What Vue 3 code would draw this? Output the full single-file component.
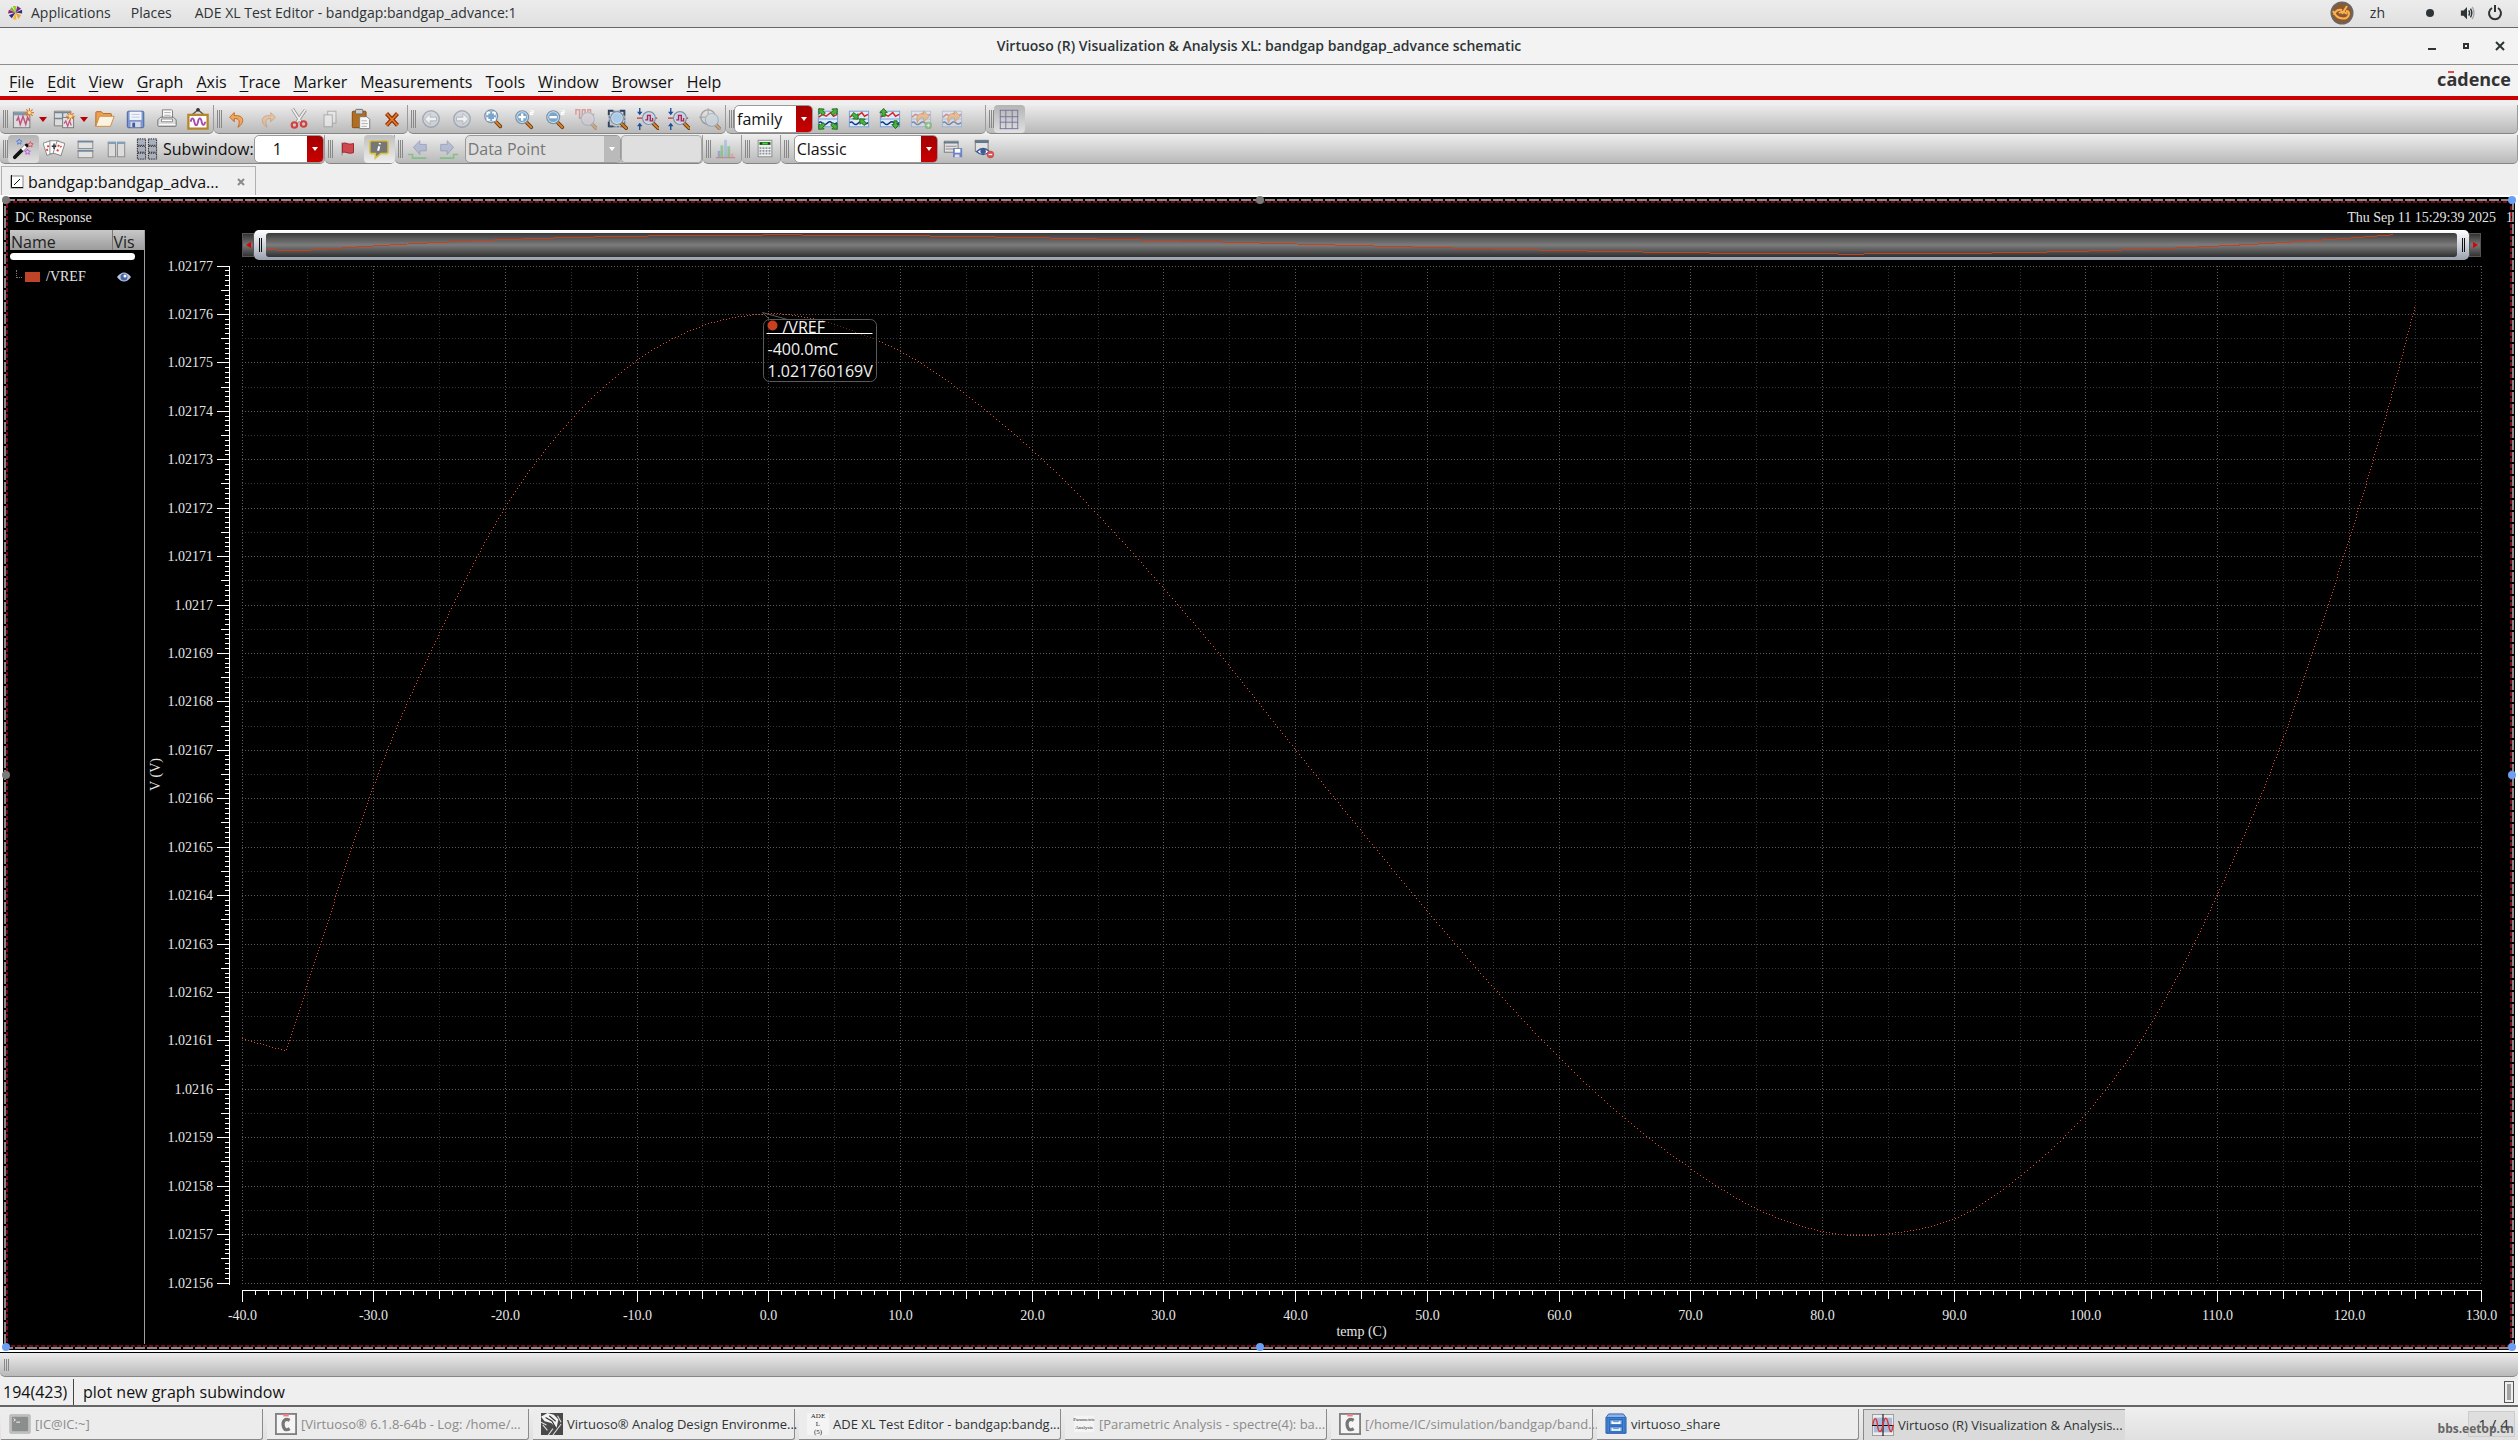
<script setup>
import { ref, computed, onMounted, onBeforeUnmount } from 'vue'

const menus = [
  ['', 'F', 'ile'], ['', 'E', 'dit'], ['', 'V', 'iew'], ['', 'G', 'raph'], ['', 'A', 'xis'],
  ['', 'T', 'race'], ['', 'M', 'arker'], ['M', 'e', 'asurements'], ['T', 'o', 'ols'],
  ['', 'W', 'indow'], ['', 'B', 'rowser'], ['', 'H', 'elp'],
]

const lens = (inner, cx = 10, cy = 9) =>
  `<path d="M${cx + 5} ${cy + 6}l5 5" stroke="#6b3a10" stroke-width="4" stroke-linecap="round"/><path d="M${cx + 5} ${cy + 6}l5 5" stroke="#d9852b" stroke-width="2" stroke-linecap="round"/><circle cx="${cx}" cy="${cy}" r="7" fill="#d3e2f0" stroke="#7d91a6" stroke-width="1.3"/><circle cx="${cx}" cy="${cy}" r="5.4" fill="#7aa6cc"/>${inner}`
const pulse = '<path d="M1 7v-5h4v9h3v-9h3v9h3v-9h3v5h4" fill="none" stroke="#c33" stroke-width="1.6"/>'
const waves = '<rect x="1.5" y="3.5" width="21" height="17" fill="#dcebfb" stroke="#6f9bd1"/>' +
  '<path d="M2 12h20" stroke="#6f9bd1"/><path d="M2 10l4-3 4 2 5-4 3 4 4-2" fill="none" stroke="#d22" stroke-width="1.6"/><path d="M2 16c3-3 4 3 7 2s4-5 7-2 4 1 6 0" fill="none" stroke="#16337e" stroke-width="1.6"/>'
const arrowHead = (x, y, a) =>
  `<g transform="translate(${x} ${y}) rotate(${a})"><path d="M0-4.5l4 4.5h-2.2v4h-3.6v-4h-2.2z" fill="#4db33d" stroke="#1a6b16" stroke-width="1"/></g>`
const spark = (x, y) =>
  `<path transform="translate(${x} ${y})" d="M0-5v10M-5 0h10M-3.5-3.5l7 7M-3.5 3.5l7-7" stroke="#e07a2d" stroke-width="1.2"/><circle cx="${x}" cy="${y}" r="1.8" fill="#ffe08a"/>`
const squiggle = '<path d="M5 14l2-4 2 8 3-9 3 9 2-8 2 4" fill="none" stroke="#c4527c" stroke-width="1.6"/>'

const icons = {
  newWin: `<rect x="1.5" y="4.5" width="18" height="17" fill="#dcdcdc" stroke="#777"/><path d="M2 6.5h17" stroke="#7d97ac" stroke-width="3"/>${squiggle}${spark(19, 5)}`,
  newSub: `<path d="M1.5 3.5h18v16h-18z" fill="#dcdcdc" stroke="#777"/><path d="M2 5h17M10.5 4v8M2 11.5h18" stroke="#6f8698" stroke-width="1.5"/><rect x="10.5" y="10.5" width="12" height="11" fill="#e4e4e4" stroke="#777"/><path d="M12 17l2-3 2 6 2-6 2 5" fill="none" stroke="#c4527c" stroke-width="1.3"/>${spark(19, 9)}`,
  open: '<path d="M2 20V5q0-1 1-1h5l2 2h8q1 0 1 1v4" fill="#e8a152" stroke="#b9621a"/><path d="M6 9h16l-4 11H2z" fill="#fbf3e2" stroke="#cf8a3b"/>',
  save: '<rect x="2.5" y="3.5" width="18" height="18" rx="1.5" fill="#7f98cf" stroke="#40599c"/><rect x="5" y="4" width="13" height="9" fill="#f2f6fc"/><path d="M7 7h9M7 10h9" stroke="#b8c6df"/><rect x="6" y="15" width="11" height="6" fill="#d6dbe4"/><rect x="8" y="16" width="3" height="5" fill="#40599c"/>',
  print: '<path d="M7 12V2h10l1 1v9" fill="#fafafa" stroke="#777"/><path d="M9 5h7M9 8h7" stroke="#aaa"/><path d="M2 13l3-3h14l3 3v6q0 1-1 1H3q-1 0-1-1z" fill="#dcdcdc" stroke="#6e6e6e"/><path d="M6 12h12v3h-12z" fill="#fff" stroke="#888"/><path d="M3 18h18" stroke="#fff"/>',
  frame: '<path d="M12 2L5 8M12 2l7 6" stroke="#555" stroke-width="1.5"/><circle cx="12" cy="2" r="2" fill="#333"/><rect x="1.5" y="7.5" width="21" height="15" fill="#fff" stroke="#b5872a" stroke-width="2.5"/><path d="M4 15c1-5 3-5 4 0s3 5 4 0 3-5 4 0 3 4 4 0" fill="none" stroke="#a848b0" stroke-width="2"/>',
  undo: '<path d="M9 5l-5 5 5 5v-3.5c5-.5 7 3 4 9.5 8-5 7-14-4-12.5z" fill="#f0a95c" stroke="#c2641a"/>',
  redo: '<path opacity=".5" d="M15 5l5 5-5 5v-3.5c-5-.5-7 3-4 9.5-8-5-7-14 4-12.5z" fill="#f2b272" stroke="#c2763a"/>',
  cut: '<path d="M5 1l9 14M19 2l-9 13" stroke="#888" stroke-width="3.5"/><path d="M5 1l9 14M19 2l-9 13" stroke="#eee" stroke-width="2"/><circle cx="7" cy="18.5" r="3" fill="none" stroke="#d3403b" stroke-width="2.3"/><circle cx="17" cy="17.5" r="3" fill="none" stroke="#d3403b" stroke-width="2.3"/>',
  copy: '<g opacity=".6"><rect x="9.5" y="3.5" width="9" height="13" fill="#eee" stroke="#888"/><rect x="5.5" y="7.5" width="9" height="13" fill="#f2f2f2" stroke="#888"/></g>',
  paste: '<rect x="2.5" y="3.5" width="15" height="18" rx="1" fill="#b36d1f" stroke="#7c4710"/><rect x="6" y="1.5" width="8" height="5" rx="1" fill="#ccc" stroke="#666"/><path d="M10.5 9.5h8l3 3v10h-11z" fill="#f8f8f8" stroke="#777"/><path d="M12.5 14h6M12.5 17h7M12.5 20h6" stroke="#aaa"/>',
  del: '<path d="M6 6l12 13M18 6L6 19" stroke="#8f3604" stroke-width="4.5"/><path d="M6 6l12 13M18 6L6 19" stroke="#e8772c" stroke-width="1.8"/>',
  back: '<g opacity=".65"><circle cx="12" cy="12" r="9" fill="#cfd5de" stroke="#8793a5" stroke-width="1.5"/><path d="M5 12l6-6v4h7v4h-7v4z" fill="#fff" stroke="#9aa5b5"/></g>',
  fwd: '<g opacity=".65"><circle cx="12" cy="12" r="9" fill="#cfd5de" stroke="#8793a5" stroke-width="1.5"/><path d="M19 12l-6-6v4H6v4h7v4z" fill="#fff" stroke="#9aa5b5"/></g>',
  zoomFit: lens('<path d="M6 8V5h3M14 8V5h-3M6 10v3h3M14 10v3h-3" stroke="#fff" stroke-width="1.8" fill="none"/>'),
  zoomIn: lens('<path d="M10 6v8M6 10h8" stroke="#fff" stroke-width="2.5"/>', 10, 10) + '<path d="M19 3h3v2h-3v2h3" stroke="#fff" stroke-width="1.3" fill="none"/>',
  zoomOut: lens('<path d="M6 10h8" stroke="#fff" stroke-width="2.5"/>', 10, 10) + '<path d="M19 3h3v2h-3v2h3" stroke="#fff" stroke-width="1.3" fill="none"/>',
  zoomPulse: `<g opacity=".4">${pulse}${lens('', 14, 12).replace('#7aa6cc', '#d5c5d5')}</g>`,
  zoomArea: `<path d="M3 8V3h5M20 8V3h-5M3 15v5h5" fill="none" stroke="#2c3e57" stroke-width="2"/><rect x="3.5" y="3.5" width="17" height="17" fill="none" stroke="#41597a" stroke-dasharray="3 1"/>${lens('', 12, 11).replace('#7aa6cc', '#a9cbe8')}`,
  zoomX: `<path d="M3 0v6M3 24v-6" stroke="#1b4f9c" stroke-width="1.5"/><path d="M0 4l3 4 3-4zM0 20l3-4 3 4z" fill="#1b4f9c"/><path d="M0 11h8v-4h4v4h10" stroke="#c33" fill="none" stroke-width="1.5"/>${lens('<path d="M9 13h2.5v-5h3v6h2.5v-3" stroke="#b0234f" stroke-width="1.5" fill="none"/>', 13, 11).replace('#7aa6cc', '#c5cfe6')}`,
  zoomTarget: `<g opacity=".5"><circle cx="10" cy="10" r="8" fill="none" stroke="#666" stroke-width="1.5"/><path d="M10 0v20M0 10h20" stroke="#666"/>${lens('', 14, 13).replace('#7aa6cc', '#c5d5e0')}</g>`,
  waveOut: `${waves}${arrowHead(5, 4, -45)}${arrowHead(19, 4, 45)}${arrowHead(5, 20, -135)}${arrowHead(19, 20, 135)}`,
  waveIn: `${waves}${arrowHead(8, 9, 135)}${arrowHead(16, 15, -45)}`,
  waveV: `${waves}${arrowHead(5, 5, 0)}${arrowHead(18, 18, 180)}`,
  waveAdd: `<g opacity=".45">${waves}<path d="M8 16c-2-8 2-11 7-9V3l6 6-6 6v-4c-4-1-5 1-7 5" fill="#f0a04b" stroke="#c2641a"/><circle cx="20" cy="19" r="4" fill="#3faa36"/><path d="M20 17v4M18 19h4" stroke="#fff" stroke-width="1.5"/></g>`,
  waveRedo: `<g opacity=".45">${waves}<path d="M8 16c-2-8 2-11 7-9V3l6 6-6 6v-4c-4-1-5 1-7 5" fill="#f0a04b" stroke="#c2641a"/></g>`,
  grid: '<path d="M2.5 2v21M8.5 2v21M15.5 2v21M21.5 2v21M2 2.5h20M2 9.5h20M2 15.5h20M2 22.5h20" stroke="#73739b"/>',
  wand: '<path d="M3 21L16 8" stroke="#111" stroke-width="4" stroke-linecap="round"/><path d="M11 13l4-4" stroke="#fff" stroke-width="3.5"/><path d="M8 1l1 2 2 .3-1.5 1.5.4 2L8 5.8l-1.9 1 .4-2L5 3.3 7 3z" fill="none" stroke="#4a7be0"/><path d="M20 4l1 2 2 .3-1.5 1.5.4 2-1.9-1-1.9 1 .4-2L17 6.3l2-.3z" fill="none" stroke="#e04a55"/><path d="M17 12l1 2 2 .3-1.5 1.5.4 2-1.9-1-1.9 1 .4-2L14 14.3l2-.3z" fill="none" stroke="#c04ae0"/>',
  cards: '<rect x="2" y="4" width="9" height="14" fill="#fff" stroke="#888" transform="rotate(-18 6 11)"/><rect x="7.5" y="3" width="9" height="14" fill="#fff" stroke="#888"/><rect x="13" y="4" width="9" height="14" fill="#fafafa" stroke="#888" transform="rotate(18 17 11)"/><path d="M5 8l1 2M4 12l1 2M16 8l2 1M15 13l2 1M19 9l1 1" stroke="#e04040" stroke-width="2"/><path d="M12 6v6M9.5 9h5" stroke="#333" stroke-width="1.5"/>',
  rows: '<rect x="4.5" y="3.5" width="16" height="8" fill="#e2e2e2" stroke="#888"/><rect x="4.5" y="13.5" width="16" height="8" fill="#e2e2e2" stroke="#888"/><path d="M4 4h17M4 14h17" stroke="#7188a0" stroke-width="2"/>',
  cols: '<rect x="3.5" y="4.5" width="8" height="16" fill="#dcdcdc" stroke="#888"/><rect x="13.5" y="4.5" width="8" height="16" fill="#dcdcdc" stroke="#888"/><path d="M3 5.5h9M13 5.5h9" stroke="#7ba0be" stroke-width="2"/>',
  six: '<g fill="#a9b0bd" stroke="#111" stroke-dasharray="1.5 1"><rect x="1.5" y="1" width="9" height="7"/><rect x="13.5" y="1" width="9" height="7"/><rect x="1.5" y="9" width="9" height="6.5"/><rect x="13.5" y="9" width="9" height="6.5"/><rect x="1.5" y="16.5" width="9" height="6.5"/><rect x="13.5" y="16.5" width="9" height="6.5"/></g>',
  flag: '<path d="M5.5 5v14" stroke="#999" stroke-width="1.5"/><path d="M6 6c4-2 5 2 12 0v10c-7 2-8-2-12 0z" fill="#cf4a50" stroke="#9d2027"/>',
  info: '<path d="M4 3h16q2 0 2 2v10q0 2-2 2h-6l-6 5v-5H4q-2 0-2-2V5q0-2 2-2z" fill="#777" stroke="#d9c34a" stroke-width="1.8"/><path d="M13 5.5l-.3 1.5M12.3 9L11 14" stroke="#fff" stroke-width="2.2"/>',
  prev: '<g opacity=".75"><path d="M1 18h5v4h15" fill="none" stroke="#6fbf73" stroke-width="1.8"/><path d="M7 10l7-7v4h7v7h-7v4z" fill="#a9b4d0" stroke="#8490b0"/></g>',
  next: '<g opacity=".75"><path d="M22 18h-5v4H2" fill="none" stroke="#6fbf73" stroke-width="1.8"/><path d="M17 10l-7-7v4H3v7h7v4z" fill="#a9b4d0" stroke="#8490b0"/></g>',
  hist: '<g opacity=".5"><path d="M3 21v-7h3v7z" fill="#6c86c8"/><path d="M6 21V8h3v13z" fill="#55b85c"/><path d="M10 21V2h3v19z" fill="#88a8e8"/><path d="M13.5 21V9h3v12z" fill="#55b85c"/><path d="M17 21v-4h3v4z" fill="#e88"/><path d="M1 21.5h21" stroke="#c33"/></g>',
  calc: '<rect x="4.5" y="2.5" width="15" height="18" fill="#eee" stroke="#888"/><path d="M6 6h12" stroke="#124a10" stroke-width="3"/><path d="M9 6h6" stroke="#3fd43b" stroke-width="2"/><path d="M6 11h12M6 14h12M6 17h12" stroke="#8a939b" stroke-width="2" stroke-dasharray="2 1.3"/>',
  listSave: '<rect x="2.5" y="3.5" width="15" height="12" fill="#e2e2e2" stroke="#777"/><path d="M2 5h16" stroke="#63788c" stroke-width="2"/><path d="M4 9h12M4 12h12" stroke="#888"/><rect x="12" y="11" width="10" height="10" fill="#6f84c4"/><rect x="14" y="12" width="6" height="4" fill="#fff"/><rect x="14" y="18" width="5" height="3" fill="#dde"/>',
  eyeDel: '<rect x="2.5" y="2.5" width="14" height="12" fill="#e2e2e2" stroke="#777"/><path d="M2 4h15" stroke="#63788c" stroke-width="3"/><path d="M4 15q7-7 14 0-7 6-14 0z" fill="#fff" stroke="#3d5a94" stroke-width="1.5"/><circle cx="11" cy="14.5" r="3" fill="#3d5a94"/><circle cx="19" cy="18" r="4" fill="#d25050"/><path d="M17 18h4" stroke="#fff" stroke-width="1.5"/>',
}

const bar1 = [
  { items: [{ n: 'newWin', t: 'New window' }, { drop: 'New window menu' }, { n: 'newSub', t: 'New subwindow' }, { drop: 'New subwindow menu' }, { n: 'open', t: 'Open' }, { n: 'save', t: 'Save' }, { n: 'print', t: 'Print' }, { n: 'frame', t: 'Save image' }] },
  { items: [{ n: 'undo', t: 'Undo' }, { n: 'redo', t: 'Redo' }, { n: 'cut', t: 'Cut' }, { n: 'copy', t: 'Copy' }, { n: 'paste', t: 'Paste' }, { n: 'del', t: 'Delete' }] },
  { items: [{ n: 'back', t: 'Previous view' }, { n: 'fwd', t: 'Next view' }, { n: 'zoomFit', t: 'Fit' }, { n: 'zoomIn', t: 'Zoom in' }, { n: 'zoomOut', t: 'Zoom out' }, { n: 'zoomPulse', t: 'Fit trace' }, { n: 'zoomArea', t: 'Zoom area' }, { n: 'zoomX', t: 'Zoom X' }, { n: 'zoomX', t: 'Zoom Y' }, { n: 'zoomTarget', t: 'Zoom to marker' }] },
  { cls: 'family', items: [{ select: 'family', w: 'w-s' }, { n: 'waveOut', t: 'Split all' }, { n: 'waveIn', t: 'Combine' }, { n: 'waveV', t: 'Split strips' }, { n: 'waveAdd', t: 'Append' }, { n: 'waveRedo', t: 'Replace' }] },
  { cls: 'fill', items: [{ n: 'grid', t: 'Grids', on: true }] },
]
const bar2 = [
  { items: [{ n: 'wand', t: 'Toggle assistants', on: true }, { n: 'cards', t: 'Cards' }, { n: 'rows', t: 'Horizontal' }, { n: 'cols', t: 'Vertical' }, { n: 'six', t: 'Tile' }, { label: 'Subwindow:' }, { select: '1', w: 'w-n' }] },
  { items: [{ n: 'flag', t: 'Flag' }, { n: 'info', t: 'Trace info', lit: true }] },
  { items: [{ n: 'prev', t: 'Previous edge' }, { n: 'next', t: 'Next edge' }, { select: 'Data Point', w: 'w-l', off: true }, { input: true }] },
  { items: [{ n: 'hist', t: 'Histogram' }] },
  { items: [{ n: 'calc', t: 'Calculator' }] },
  { cls: 'fill classic', items: [{ select: 'Classic', w: 'w-m' }, { n: 'listSave', t: 'Save workspace' }, { n: 'eyeDel', t: 'Delete workspace' }] },
]

const tasks = [
  { icon: 'term', text: '[IC@IC:~]', dim: true },
  { icon: 'c', text: '[Virtuoso® 6.1.8-64b - Log: /home/...', dim: true },
  { icon: 'hand', text: 'Virtuoso® Analog Design Environme...' },
  { icon: 'ade', text: 'ADE XL Test Editor - bandgap:bandg...' },
  { icon: 'par', text: '[Parametric Analysis - spectre(4): ba...', dim: true },
  { icon: 'c', text: '[/home/IC/simulation/bandgap/band...', dim: true },
  { icon: 'cab', text: 'virtuoso_share' },
  { icon: 'wave', text: 'Virtuoso (R) Visualization & Analysis...', active: true },
]
const taskIcons = {
  term: '<rect x="1" y="2" width="22" height="20" rx="1" fill="#c9c9c9" stroke="#aaa"/><rect x="3" y="4" width="18" height="16" fill="#8a8f8d"/><path d="M5 6l2 1.5-2 1.5M8 10h4" stroke="#fff" fill="none"/>',
  c: '<rect x="1" y="1" width="22" height="22" fill="#f5f5f5" stroke="#808080" stroke-width="2"/><path d="M16 8c-5-3-8 1-7 6s4 5 7 3" fill="none" stroke="#777" stroke-width="3.5"/><path d="M9 2.5h6" stroke="#f28080" stroke-width="2.5"/>',
  hand: '<rect width="24" height="24" fill="#4a4a4a"/><path d="M0 4l7-4 7 2 5 5-2 9-6-5-7-2z" fill="#f4f4f4"/><path d="M5 5l7 4 4 7M9 3l7 6" stroke="#333" stroke-width="1.2" fill="none"/><path d="M2 13l5 6M13 24l9-12M0 10l6 3M8 24l5-7M18 3l4 7" stroke="#ddd" stroke-width="1.2" fill="none"/>',
  ade: '<rect width="24" height="24" fill="#f4f4f4"/>',
  par: '<rect x="1" y="3" width="22" height="18" fill="#f4f4f4"/>',
  cab: '<path d="M4 1h16l3 4v17H1V5z" fill="#8ab2e8" stroke="#2c61ad"/><rect x="2" y="5" width="20" height="17" fill="#4383d3" stroke="#2c61ad"/><rect x="5" y="7" width="14" height="6" fill="#6ba0e0" stroke="#2c61ad"/><rect x="5" y="14.5" width="14" height="6" fill="#6ba0e0" stroke="#2c61ad"/><path d="M8 9v2h8v-2M8 16.5v2h8v-2" fill="none" stroke="#fff" stroke-width="1.8"/>',
  wave: '<rect x=".5" y=".5" width="23" height="23" fill="#ececec" stroke="#999"/><rect x="2" y="4" width="20" height="16" fill="#a9bbdd"/><path d="M12 0v24M0 12.5h24" stroke="#111" stroke-width="1.2"/><path d="M1 12C2 3 5 3 6 12s4 10 6 0 4-10 6 0 4 9 5 0" fill="none" stroke="#d33" stroke-width="1.6"/>',
}

/* DC sweep result: temperature in C, voltage as 10 uV steps above 1.02156 V */
const sweep = [
  [-40, 5.05], [-36.7, 4.8], [-30, 10.3], [-25, 13.45], [-20, 16.05], [-15, 17.85], [-10, 19.07], [-5, 19.78],
  [-0.4, 20.02], [2.8, 19.95], [5.4, 19.76], [10, 19.24], [14.4, 18.46], [20, 17.2], [25, 15.85], [30, 14.33],
  [35, 12.72], [40, 11], [45, 9.32], [50, 7.67], [55, 6.1], [60, 4.65], [65, 3.39], [70, 2.36], [75, 1.53],
  [80, 1.07], [84, 1], [90, 1.34], [95, 2.23], [100, 3.52], [105, 5.41], [110, 8.06], [115, 11.3],
  [120.2, 15.59], [122.8, 17.98], [125, 20.22],
]

const canvas = ref(null)
const w = ref(2370)
const h = ref(1090)
let observer
onMounted(() => {
  const measure = () => {
    w.value = canvas.value.clientWidth
    h.value = canvas.value.clientHeight
  }
  measure()
  observer = new ResizeObserver(measure)
  observer.observe(canvas.value)
})
onBeforeUnmount(() => observer && observer.disconnect())

const box = computed(() => ({ l: 97, r: w.value - 34, t: 6, b: h.value - 67 }))
const px = (t) => box.value.l + ((t + 40) / 170) * (box.value.r - box.value.l)
const py = (u) => box.value.b - (u / 21) * (box.value.b - box.value.t)
const snap = (v) => Math.floor(v) + 0.5

/* Hermite interpolation through the sweep points; the first span stays straight */
const curve = (() => {
  const slope = sweep.map((p, i) => {
    const a = sweep[i <= 1 ? i : i - 1]
    const b = sweep[i === 0 ? 1 : Math.min(i + 1, sweep.length - 1)]
    return (b[1] - a[1]) / (b[0] - a[0])
  })
  const out = [sweep[0]]
  for (let i = 0; i < sweep.length - 1; i++) {
    const [t0, u0] = sweep[i]
    const [t1, u1] = sweep[i + 1]
    const d = t1 - t0
    for (let k = 1; k <= 8; k++) {
      const s = k / 8
      const u = i === 0
        ? u0 + (u1 - u0) * s
        : (2 * s ** 3 - 3 * s ** 2 + 1) * u0 + (s ** 3 - 2 * s ** 2 + s) * d * slope[i] +
          (3 * s ** 2 - 2 * s ** 3) * u1 + (s ** 3 - s ** 2) * d * slope[i + 1]
      out.push([t0 + d * s, u])
    }
  }
  return out
})()

/* one single-pixel dot for every third pixel along the steeper axis */
const trace = computed(() => {
  const pts = curve.map(([t, u]) => [px(t), py(u)])
  let d = ''
  let next = 0
  for (let i = 1; i < pts.length; i++) {
    const [x0, y0] = pts[i - 1]
    const [x1, y1] = pts[i]
    const len = Math.max(Math.abs(x1 - x0), Math.abs(y1 - y0))
    while (next < len) {
      const s = next / len
      d += `M${Math.round(x0 + (x1 - x0) * s)} ${Math.round(y0 + (y1 - y0) * s)}h1v1h-1z`
      next += 3
    }
    next -= len
  }
  return d
})
const miniTrace = computed(() => 'M' + curve.map(([t, u]) =>
  `${((t + 40) / 170) * (box.value.r - box.value.l - 48)} ${22 - u}`).join('L'))

const xTicks = computed(() => Array.from({ length: 171 }, (_, i) => ({
  x: snap(px(i - 40)), len: i % 10 === 0 ? 12 : i % 5 === 0 ? 9 : 5, label: i % 10 === 0 ? (i - 40).toFixed(1) : '',
})))
const yTicks = computed(() => Array.from({ length: 211 }, (_, i) => ({
  y: snap(py(i / 10)), len: i % 10 === 0 ? 13 : i % 5 === 0 ? 9 : 5,
  label: i % 10 === 0 ? String(+(1.02156 + i / 1000000).toFixed(5)) : '',
})))
const xGrid = computed(() => Array.from({ length: 35 }, (_, i) => ({ p: snap(px(i * 5 - 40)), major: i % 2 === 0 })))
const yGrid = computed(() => Array.from({ length: 43 }, (_, i) => ({ p: snap(py(i / 2)), major: i % 2 === 0 })))
const tip = computed(() => ({ x: Math.floor(px(-0.4)) - 0.5, y: Math.floor(py(20.02)) - 0.5 }))
</script>

<template>
  <div class="screen">
    <header class="topbar">
      <svg class="gnome" viewBox="0 0 16 16">
        <path d="M8 8L5 1h4z" fill="#9ccd2a" /><path d="M8 8l2-7 4 3z" fill="#7b2a7d" /><path d="M8 8l7-3v4z" fill="#2b2d7a" />
        <path d="M8 8l6 3-3 4z" fill="#efa724" /><path d="M8 8l1 8-4-1z" fill="#f0b93a" /><path d="M8 8l-4 6-3-3z" fill="#2b2d7a" />
        <path d="M8 8L0 9l1-4z" fill="#932279" /><path d="M8 8L2 5l2-3z" fill="#7fae28" />
      </svg>
      <button class="app">Applications</button>
      <button class="places">Places</button>
      <span>ADE XL Test Editor - bandgap:bandgap_advance:1</span>
      <div class="tray">
        <svg class="ime" viewBox="0 0 24 24"><circle cx="12" cy="12" r="11.5" fill="#6d6560" /><circle cx="12" cy="12" r="9.5" fill="#8a5a35" /><path d="M3 10q3 6 7 7 8 2 9-4 0-3-3-3M4 14q2-6 8-5M12 13l5-8M9 12q4-3 8 1" fill="none" stroke="#ffb14a" stroke-width="2" /></svg>
        <span class="lang">zh</span>
        <svg class="rec" viewBox="0 0 10 10"><circle cx="5" cy="5" r="4" fill="#2e3436" /></svg>
        <svg class="vol" viewBox="0 0 16 16"><path d="M1 5h3l4-4v14l-4-4H1z" fill="#2e3436" /><path d="M10 5q2 3 0 6M12 3q3 5 0 10" fill="none" stroke="#2e3436" stroke-width="1.6" /><path d="M14 1q4 7 0 14" fill="none" stroke="#aaa" stroke-width="1.6" /></svg>
        <svg class="pow" viewBox="0 0 16 16"><path d="M5 3a6 6 0 1 0 6 0M8 0v7" fill="none" stroke="#2e3436" stroke-width="2" /></svg>
      </div>
    </header>

    <div class="titlebar">
      <span class="spacer"></span>
      <h1>Virtuoso (R) Visualization &amp; Analysis XL: bandgap bandgap_advance schematic</h1>
      <div class="winbtns">
        <button aria-label="Minimize"><svg viewBox="0 0 10 10"><path d="M1 8h8" stroke="#2e3436" stroke-width="2" /></svg></button>
        <button aria-label="Restore"><svg viewBox="0 0 10 10"><rect x="3" y="3" width="4" height="4" fill="none" stroke="#2e3436" stroke-width="2" /></svg></button>
        <button aria-label="Close"><svg viewBox="0 0 10 10"><path d="M1 1l8 8M9 1L1 9" stroke="#2e3436" stroke-width="2" /></svg></button>
      </div>
    </div>

    <nav class="menubar">
      <button v-for="m in menus" :key="m.join('')">{{ m[0] }}<u>{{ m[1] }}</u>{{ m[2] }}</button>
      <strong class="brand">c<span>a</span>dence</strong>
    </nav>

    <div class="toolbars">
      <div v-for="(bar, b) in [bar1, bar2]" :key="b" class="bar">
        <div v-for="(seg, s) in bar" :key="s" class="seg" :class="seg.cls">
          <i class="grip"></i>
          <template v-for="(it, i) in seg.items" :key="i">
            <button v-if="it.n" class="tool" :class="{ on: it.on, lit: it.lit }" :aria-label="it.t">
              <svg viewBox="0 0 24 24" fill="none" v-html="icons[it.n]"></svg>
            </button>
            <button v-else-if="it.drop" class="drop" :aria-label="it.drop"></button>
            <label v-else-if="it.label" class="lbl" for="sel-1">{{ it.label }}</label>
            <div v-else-if="it.select" class="combo" :class="[it.w, { off: it.off }]">
              <select :id="'sel-' + it.select.replace(' ', '-')" :aria-label="it.select" :disabled="it.off"><option>{{ it.select }}</option></select>
              <i class="caret"></i>
            </div>
            <input v-else class="value" type="text" aria-label="Value" disabled />
          </template>
        </div>
      </div>
    </div>

    <div class="tabs">
      <div class="tab">
        <svg class="tabicon" viewBox="0 0 14 14"><rect x="1" y="1" width="12" height="12" fill="#fff" stroke="#888" /><path d="M1.5 0v12.5H13M4 10l6-6" fill="none" stroke="#111" /></svg>
        <span>bandgap:bandgap_adva...</span>
        <button aria-label="Close tab"><svg viewBox="0 0 8 8"><path d="M1 1l6 6M7 1L1 7" stroke="#8a8a8a" stroke-width="2" /></svg></button>
      </div>
    </div>

    <main class="graph">
      <div class="head">
        <span>DC Response</span>
        <time>Thu Sep 11 15:29:39 2025</time>
        <span class="idx">1</span>
      </div>
      <div class="body">
        <div class="legend">
          <table>
            <thead><tr><th class="name">Name</th><th class="vis">Vis</th></tr></thead>
            <tbody>
              <tr class="filter"><td colspan="2"><input type="text" aria-label="Filter traces" /></td></tr>
              <tr class="entry">
                <td><div><i class="branch"></i><i class="swatch"></i>/VREF</div></td>
                <td class="eye"><svg viewBox="0 0 14 10"><path d="M0 5q7-9 14 0-7 9-14 0z" fill="#b8c6e4" /><circle cx="7" cy="5" r="3.5" fill="#4a66a8" /><circle cx="8" cy="4" r="1.5" fill="#fff" /></svg></td>
              </tr>
            </tbody>
          </table>
        </div>
        <div class="plot">
          <div class="range">
            <button class="step left" aria-label="Pan left"></button>
            <div class="window">
              <button class="knob" aria-label="Range start"></button>
              <div class="track"><svg><path :d="miniTrace" fill="none" stroke="#c8401f" shape-rendering="crispEdges" /></svg></div>
              <button class="knob" aria-label="Range end"></button>
            </div>
            <button class="step right" aria-label="Pan right"></button>
          </div>
          <div ref="canvas" class="canvas">
            <svg :width="w" :height="h">
              <g shape-rendering="crispEdges">
                <line v-for="g in xGrid" :key="'x' + g.p" :class="g.major ? 'major' : 'minor'" :x1="g.p" :x2="g.p" :y1="box.t" :y2="box.b" />
                <line v-for="g in yGrid" :key="'y' + g.p" :class="g.major ? 'major' : 'minor'" :x1="box.l" :x2="box.r" :y1="g.p" :y2="g.p" />
                <line class="axis" :x1="84.5" :x2="84.5" :y1="box.t" :y2="box.b + 2" />
                <line class="axis" :x1="box.l" :x2="box.r + 1" :y1="snap(box.b + 7)" :y2="snap(box.b + 7)" />
                <line v-for="(t, i) in yTicks" :key="'a' + i" class="axis" :x1="85 - t.len" :x2="85" :y1="t.y" :y2="t.y" />
                <line v-for="(t, i) in xTicks" :key="'b' + i" class="axis" :x1="t.x" :x2="t.x" :y1="box.b + 7" :y2="box.b + 7 + t.len" />
                <path class="trace" :d="trace" />
              </g>
              <g class="labels">
                <text v-for="(t, i) in yTicks.filter((t) => t.label)" :key="i" x="68" :y="t.y + 4" text-anchor="end">{{ t.label }}</text>
                <text v-for="(t, i) in xTicks.filter((t) => t.label)" :key="i" :x="t.x" :y="h - 30" text-anchor="middle">{{ t.label }}</text>
                <text :x="(box.l + box.r) / 2" :y="h - 14" text-anchor="middle">temp (C)</text>
                <text :transform="`translate(15 ${(box.t + box.b) / 2}) rotate(-90)`" text-anchor="middle">V (V)</text>
              </g>
              <g class="tip" :transform="`translate(${tip.x} ${tip.y})`">
                <path d="M7 7L0 0l25 7" fill="none" stroke="#5a5a5a" />
                <rect x="1" y="7" width="113" height="62" rx="6" />
                <circle cx="10" cy="13" r="5" fill="#c8401f" />
                <text x="20" y="20">/VREF</text>
                <line x1="4" x2="110" y1="21" y2="21" stroke="#fff" />
                <text x="5" y="42">-400.0mC</text>
                <text x="5" y="64">1.021760169V</text>
              </g>
            </svg>
          </div>
        </div>
      </div>
      <svg class="outline"><rect class="gray" x="0" y="0" width="100%" height="100%" /></svg>
      <svg class="outline inner"><rect class="red" x="0" y="0" width="100%" height="100%" /></svg>
      <i class="dot tl"></i><i class="dot tc"></i><i class="dot tr"></i><i class="dot ml"></i>
      <i class="dot mr"></i><i class="dot bl"></i><i class="dot bc"></i><i class="dot br"></i>
    </main>

    <div class="lowerbar"><i class="grip"></i></div>
    <div class="status">
      <span class="count">194(423)</span>
      <span class="msg">plot new graph subwindow</span>
      <i class="gauge"></i>
    </div>

    <footer class="taskbar">
      <button v-for="(t, i) in tasks" :key="i" class="task" :class="{ dim: t.dim, active: t.active }">
        <span class="tic">
          <svg viewBox="0 0 24 24" fill="none" v-html="taskIcons[t.icon]"></svg>
          <small v-if="t.icon === 'ade'" class="mini ade">ADE<br />L<br />(5)</small>
          <small v-if="t.icon === 'par'" class="mini">Parametric<br />Analysis</small>
        </span>
        <span class="txt">{{ t.text }}</span>
      </button>
      <button class="workspace">1 / 4</button>
      <span class="mark">bbs.eetop.cn</span>
    </footer>
  </div>
</template>

<style>
body {
  margin: 0;
}
</style>

<style scoped>
.screen {
  display: flex;
  flex-direction: column;
  min-height: 100vh;
  background: #efefef;
  color: #111;
  font: 16px/20px "Open Sans", "Noto Sans", sans-serif;
  overflow: hidden;
}
.screen * {
  box-sizing: border-box;
}
button,
input,
select {
  font: inherit;
  color: inherit;
  background: none;
  border: 0;
  padding: 0;
  margin: 0;
}
svg {
  display: block;
  flex: none;
}
.topbar {
  display: flex;
  align-items: center;
  height: 28px;
  padding: 0 15px 2px 8px;
  background: linear-gradient(#ececec, #e0e0e0);
  border-bottom: 1px solid #666;
  color: #2e3436;
  font: 14px/20px "Open Sans", sans-serif;
}
.gnome {
  width: 15px;
  height: 15px;
  margin-right: 8px;
}
.app {
  margin-right: 20px;
}
.places {
  margin-right: 23px;
}
.tray {
  display: flex;
  align-items: center;
  margin-left: auto;
}
.ime {
  width: 24px;
  height: 24px;
  margin-right: 16px;
}
.lang {
  margin-right: 40px;
}
.rec {
  width: 10px;
  height: 10px;
  margin-right: 24px;
}
.vol {
  width: 16px;
  height: 14px;
  margin-right: 12px;
}
.pow {
  width: 16px;
  height: 16px;
}
.titlebar {
  display: grid;
  grid-template-columns: 1fr auto 1fr;
  align-items: center;
  height: 37px;
  background: #f3f3f3;
  border-bottom: 1px solid #8e8e88;
}
.titlebar h1 {
  margin: 0;
  font: 600 14px/20px "Open Sans", sans-serif;
  color: #2e3436;
}
.winbtns {
  display: flex;
  justify-content: flex-end;
  gap: 24px;
  padding-right: 13px;
}
.winbtns svg {
  width: 10px;
  height: 10px;
}
.menubar {
  display: flex;
  align-items: center;
  gap: 13px;
  height: 35px;
  padding: 2px 7px 0 9px;
  background: #f3f3f3;
  border-bottom: 4px solid #c00;
}
.menubar u {
  text-decoration: underline;
  text-underline-offset: 3px;
  text-decoration-thickness: 1px;
}
.brand {
  margin-left: auto;
  padding-bottom: 6px;
  color: #333;
  font: 700 18px/20px "Open Sans", sans-serif;
}
.brand span {
  position: relative;
}
.brand span::after {
  content: "";
  position: absolute;
  left: 2px;
  top: 4px;
  width: 6px;
  height: 2px;
  background: #e8474c;
}
.toolbars {
  display: flex;
  flex-direction: column;
  gap: 1px;
  padding-top: 5px;
}
.bar {
  display: flex;
}
.seg {
  display: flex;
  align-items: center;
  height: 29px;
  background: linear-gradient(#ececec, #b9b9b9);
  border-bottom: 1px solid #858585;
  border-right: 1px solid #9a9a9a;
  border-radius: 0 0 5px 5px;
}
.seg > * {
  flex: none;
}
.family {
  padding-right: 18px;
}
.fill {
  flex: 1;
}
.grip {
  width: 5px;
  height: 18px;
  margin: 0 0 0 3px;
  background: linear-gradient(90deg, #888 1px, transparent 1px 2px, #888 2px 3px, transparent 3px 4px, #888 4px);
}
.classic .grip {
  margin-right: 5px;
}
.tool {
  width: 31px;
  height: 28px;
  padding: 2px 4px;
  border-radius: 4px;
}
.seg .tool:last-child {
  margin-right: -1px;
}
.tool svg {
  width: 22px;
  height: 22px;
}
.tool.on {
  background: linear-gradient(#b4b4b4, #e0e0e0);
}
.tool.lit {
  background: linear-gradient(#c0c0c0, #eee);
}
.drop {
  width: 10px;
  height: 28px;
}
.drop::before {
  content: "";
  display: block;
  width: 0;
  border: 4px solid transparent;
  border-top: 5px solid #b00;
  border-bottom: 0;
}
.combo {
  position: relative;
  height: 28px;
  border-radius: 5px;
  background: #fff;
  border: 1px solid #999;
  overflow: hidden;
}
.combo select {
  appearance: none;
  width: 100%;
  height: 26px;
  padding-left: 2px;
  opacity: 1;
}
.combo.w-s {
  width: 79px;
}
.combo.w-n {
  width: 70px;
}
.combo.w-n select {
  padding-left: 18px;
}
.combo.w-l {
  width: 156px;
}
.combo.w-m {
  width: 144px;
}
.caret {
  position: absolute;
  top: 0;
  right: 0;
  width: 16px;
  height: 100%;
  background: linear-gradient(#a50000, #c80000);
  pointer-events: none;
}
.caret::after {
  content: "";
  position: absolute;
  left: 5px;
  top: 11px;
  border: 3px solid transparent;
  border-top: 4px solid #fff;
  border-bottom: 0;
}
.combo.off {
  background: #dfdfdf;
  color: #777;
}
.off .caret {
  background: #bababa;
}
.value {
  width: 81px;
  height: 28px;
  background: #dfdfdf;
  border: 1px solid #aaa;
  border-radius: 4px;
}
.tabs {
  display: flex;
  height: 31px;
  padding: 2px 0 0 1px;
}
.tab {
  display: flex;
  align-items: center;
  width: 255px;
  padding: 1px 10px 0 8px;
  border: 1px solid #b0b0b0;
  border-bottom: 0;
}
.tabicon {
  width: 14px;
  height: 14px;
  margin-right: 4px;
}
.tab button {
  margin-left: auto;
}
.tab button svg {
  width: 8px;
  height: 8px;
}
.graph {
  position: relative;
  display: flex;
  flex: 1;
  flex-direction: column;
  min-height: 500px;
  background: #000;
  color: #e6e6e6;
  border: solid #fff;
  border-width: 2px 3px;
  font: 14px/16px "Liberation Serif", serif;
}
.head {
  display: flex;
  padding: 13px 2px 3px 12px;
  height: 33px;
  overflow: hidden;
}
.head time {
  margin-left: auto;
}
.idx {
  margin-left: 10px;
}
.body {
  display: flex;
  flex: 1;
}
.legend {
  width: 135px;
  margin: 0 0 6px 7px;
  border-right: 1px solid #a0a0a0;
}
.legend table {
  width: 100%;
  border-collapse: collapse;
}
.legend th {
  height: 20px;
  padding: 4px 1px 0;
  text-align: left;
  color: #222;
  font: 16px/16px "Open Sans", sans-serif;
  background: linear-gradient(#c8c8c8, #9c9c9c);
}
.legend .vis {
  width: 32px;
  border-left: 1px solid #777;
}
.legend td {
  padding: 0;
}
.filter input {
  display: block;
  width: 125px;
  height: 7px;
  margin: 3px 0;
  border-radius: 4px;
  background: #fff;
}
.entry td {
  height: 26px;
  padding: 2px 0 0;
}
.entry div {
  display: flex;
  align-items: center;
}
.branch {
  width: 6px;
  height: 8px;
  margin: 0 3px 7px 6px;
  border: dotted #777;
  border-width: 0 0 1px 1px;
}
.swatch {
  width: 15px;
  height: 10px;
  margin-right: 6px;
  background: #bd4428;
}
.eye svg {
  width: 14px;
  height: 10px;
  margin-left: 5px;
}
.plot {
  display: flex;
  flex: 1;
  flex-direction: column;
  min-width: 0;
}
.range {
  display: flex;
  align-items: center;
  height: 30px;
  margin: 0 34px 0 97px;
}
.step {
  display: flex;
  align-items: center;
  justify-content: center;
  width: 12px;
  height: 24px;
  border: 1px solid #555;
  background: linear-gradient(#333, #777 50%, #333);
}
.step::before {
  content: "";
  border: 3px solid transparent;
}
.left::before {
  border-right: 5px solid #d00;
  border-left: 0;
}
.right::before {
  border-left: 5px solid #d00;
  border-right: 0;
}
.window {
  display: flex;
  align-items: center;
  flex: 1;
  min-width: 0;
  height: 30px;
  border-radius: 5px;
  background: linear-gradient(#fff, #c5cbd4 60%, #98a0ac);
}
.knob {
  width: 12px;
  height: 30px;
  flex: none;
  background: linear-gradient(90deg, transparent 5px, #111 5px 6px, transparent 6px 7px, #111 7px 8px, transparent 8px) center / 12px 14px no-repeat;
}
.track {
  flex: 1;
  min-width: 0;
  height: 24px;
  border-radius: 3px;
  background: linear-gradient(#3a3a3a, #7c7c7c 50%, #303030);
}
.track svg {
  width: 100%;
  height: 24px;
}
.canvas {
  flex: 1 1 0;
  min-height: 0;
  overflow: hidden;
  position: relative;
}
.canvas svg {
  position: absolute;
}
.major {
  stroke: #5c5c5c;
  stroke-dasharray: 1 2;
}
.minor {
  stroke: #363636;
  stroke-dasharray: 1 2;
}
.axis {
  stroke: #fff;
}
.trace {
  fill: #e04a2a;
}
.labels text {
  fill: #e6e6e6;
}
.tip rect {
  fill: rgba(0, 0, 0, 0.5);
  stroke: #5a5a5a;
}
.tip text {
  fill: #f0f0f0;
  font: 16px "Open Sans", sans-serif;
}
.outline {
  position: absolute;
  left: 2px;
  top: 3px;
  width: calc(100% - 4px);
  height: calc(100% - 5px);
  overflow: visible;
  pointer-events: none;
}
.inner {
  left: 4px;
  top: 5px;
  width: calc(100% - 8px);
  height: calc(100% - 9px);
}
.gray {
  fill: none;
  stroke: #8a8a8a;
  stroke-width: 2px;
  stroke-dasharray: 10 2;
}
.red {
  fill: none;
  stroke: #f0143c;
  stroke-dasharray: 4 2;
}
.dot {
  position: absolute;
  width: 8px;
  height: 8px;
  margin: -3px;
  border-radius: 4px;
  background: #6b9ff5;
}
.tl,
.tc,
.ml {
  background: #7a7a7a;
}
.tl,
.tc,
.tr {
  top: 2px;
}
.bl,
.bc,
.br {
  bottom: 2px;
}
.tl,
.ml,
.bl {
  left: 2px;
}
.tr,
.mr,
.br {
  right: 2px;
}
.tc,
.bc {
  left: 50%;
}
.ml,
.mr {
  top: 50%;
}
.lowerbar {
  display: flex;
  align-items: center;
  height: 25px;
  padding-left: 1px;
  border-top: 1px solid #000;
  border-bottom: 1px solid #858585;
  border-radius: 0 0 5px 5px;
  background: linear-gradient(#ececec, #b9b9b9);
}
.lowerbar .grip {
  height: 12px;
}
.status {
  display: flex;
  align-items: center;
  height: 30px;
  padding: 2px 4px 0 3px;
  border-bottom: 2px solid #666;
}
.count {
  width: 71px;
  height: 26px;
  line-height: 26px;
  border-right: 1px solid #444;
}
.msg {
  margin-left: 9px;
}
.gauge {
  width: 10px;
  height: 22px;
  margin-left: auto;
  border: 1px solid #555;
  background: #a3a3a3;
  box-shadow: inset 0 0 0 2px #eee;
}
.taskbar {
  position: relative;
  display: flex;
  align-items: center;
  gap: 4px;
  height: 33px;
  padding: 1px 3px 0 1px;
  background: linear-gradient(#efefef, #e0e0e0);
  color: #2e3436;
  font: 13px/18px "Open Sans", sans-serif;
}
.task {
  display: flex;
  align-items: center;
  flex: 0 1 262px;
  min-width: 0;
  height: 31px;
  padding: 0 0 0 8px;
  border: solid #8a8a8a;
  border-width: 0 1px 1px 0;
  border-radius: 0 0 3px 0;
  background: #ececec;
}
.active {
  border-width: 1px 0 0 1px;
  background: #dadada;
}
.dim {
  color: #8b8b8b;
}
.tic {
  position: relative;
  flex: none;
  width: 22px;
  margin-right: 4px;
}
.tic svg {
  width: 22px;
  height: 22px;
}
.mini {
  position: absolute;
  inset: 0;
  display: grid;
  align-content: center;
  justify-content: center;
  font: 5px/8px "Liberation Serif", serif;
  text-align: center;
  color: #222;
}
.ade {
  font-size: 7px;
}
.txt {
  white-space: nowrap;
}
.workspace {
  width: 47px;
  height: 26px;
  margin-left: auto;
  padding-left: 4px;
  border: 1px solid #ccc;
  background: #dedede;
  font-size: 15px;
}
.mark {
  position: absolute;
  right: 4px;
  bottom: 4px;
  color: #666;
  font: bold 12px/14px "Open Sans", sans-serif;
}
</style>
